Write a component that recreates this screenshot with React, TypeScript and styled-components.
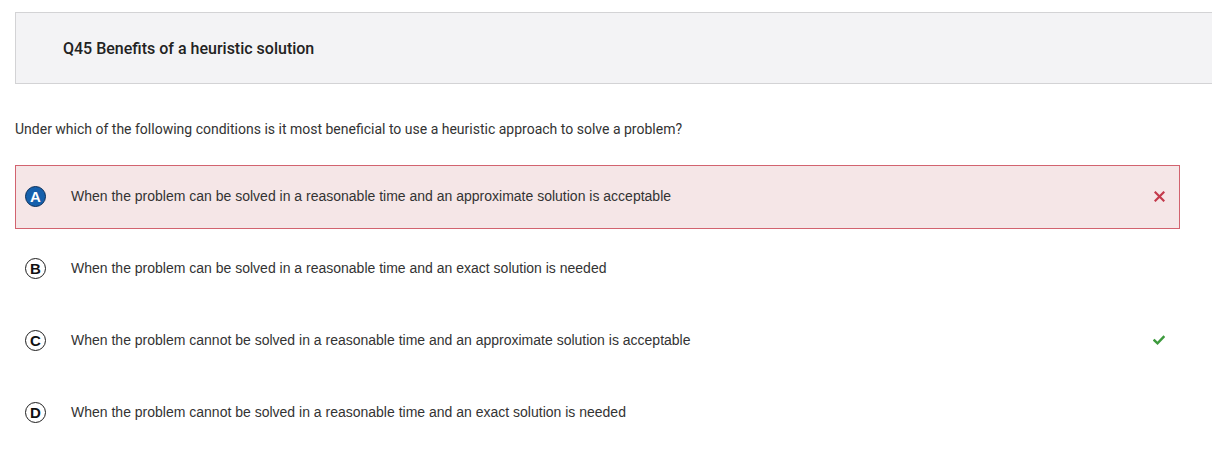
import React from "react";
import styled, { createGlobalStyle } from "styled-components";

const Global = createGlobalStyle`
  html, body { margin: 0; padding: 0; background: #ffffff; }
  body { font-family: Roboto, "Liberation Sans", Arial, sans-serif; color: #333; }
`;

const Page = styled.div`
  padding: 12px 0 0 15px;
  overflow: hidden;
`;

const Header = styled.div`
  height: 70px;
  background: #f3f3f5;
  border: 1px solid #d3d3d5;
  border-right: none;
  display: flex;
  align-items: center;
  padding-left: 47px;
  margin-right: -10px;
`;

const Title = styled.h2`
  margin: 0;
  font-family: Roboto, sans-serif;
  font-weight: 500;
  font-size: 16px;
  color: #222;
  padding-top: 1px;
`;

const Question = styled.p`
  margin: 36px 0 0 0;
  font-family: Roboto, sans-serif;
  font-size: 14px;
  color: #333;
  line-height: 18px;
`;

const Options = styled.div`
  margin-top: 27px;
  width: 1165px;
  display: flex;
  flex-direction: column;
  gap: 8px;
`;

const Row = styled.div<{ $wrong?: boolean }>`
  box-sizing: border-box;
  height: 64px;
  display: flex;
  align-items: center;
  padding: 0 12px 2px 9px;
  border: 1px solid ${(p) => (p.$wrong ? "#d2636f" : "transparent")};
  background: ${(p) => (p.$wrong ? "#f5e6e7" : "transparent")};
`;

const Badge = styled.span<{ $selected?: boolean }>`
  box-sizing: border-box;
  flex: none;
  width: 21px;
  height: 21px;
  border-radius: 50%;
  display: flex;
  align-items: center;
  justify-content: center;
  font-family: "Liberation Sans", Arial, sans-serif;
  font-weight: 700;
  font-size: 15px;
  line-height: 1;
  padding-top: 1px;
  border: 1.6px solid ${(p) => (p.$selected ? "#0b2f5a" : "#1e1e1e")};
  background: ${(p) => (p.$selected ? "#1560ac" : "#fff")};
  color: ${(p) => (p.$selected ? "#fff" : "#111")};
`;

const Text = styled.span`
  flex: 1;
  margin-left: 25px;
  font-family: "Liberation Sans", Arial, sans-serif;
  font-size: 14px;
  color: #333;
`;

const Mark = styled.span`
  flex: none;
  width: 16px;
  height: 16px;
  display: flex;
  align-items: center;
  justify-content: center;
`;

const Cross = () => (
  <svg width="11" height="11" viewBox="0 0 11 11">
    <path d="M1.5 1.5 L9.5 9.5 M9.5 1.5 L1.5 9.5" stroke="#c43a4c" strokeWidth="2.2" strokeLinecap="square" />
  </svg>
);

const Check = () => (
  <svg width="12" height="10" viewBox="0 0 12 10">
    <path d="M1.5 5.5 L4.5 8.3 L10.5 2" stroke="#3d9a3d" strokeWidth="2.4" fill="none" strokeLinecap="square" />
  </svg>
);

const options = [
  { l: "A", t: "When the problem can be solved in a reasonable time and an approximate solution is acceptable", wrong: true, sel: true, mark: "x" },
  { l: "B", t: "When the problem can be solved in a reasonable time and an exact solution is needed" },
  { l: "C", t: "When the problem cannot be solved in a reasonable time and an approximate solution is acceptable", mark: "check" },
  { l: "D", t: "When the problem cannot be solved in a reasonable time and an exact solution is needed" },
];

export default function App() {
  return (
    <Page>
      <Global />
      <Header>
        <Title>Q45 Benefits of a heuristic solution</Title>
      </Header>
      <Question>
        Under which of the following conditions is it most beneficial to use a heuristic approach to solve a problem?
      </Question>
      <Options>
        {options.map((o) => (
          <Row key={o.l} $wrong={o.wrong}>
            <Badge $selected={o.sel}>{o.l}</Badge>
            <Text>{o.t}</Text>
            <Mark>{o.mark === "x" ? <Cross /> : o.mark === "check" ? <Check /> : null}</Mark>
          </Row>
        ))}
      </Options>
    </Page>
  );
}
